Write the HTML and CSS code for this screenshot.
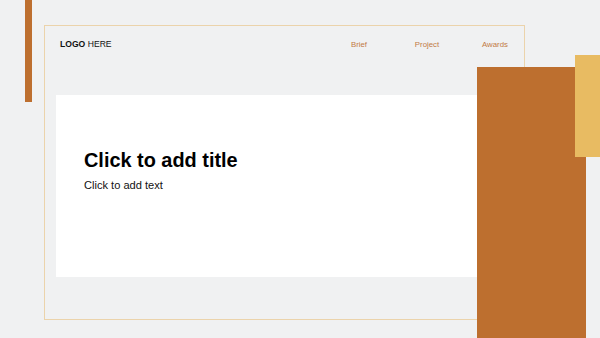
FILE: index.html
```html
<!DOCTYPE html>
<html lang="en">
<head>
  <meta charset="UTF-8" />
  <title>Slide</title>
  <link rel="stylesheet" href="styles.css">
</head>
<body>
  <div class="slide">
    <div class="bar-left"></div>
    <div class="frame">
      <div class="header">
        <div class="logo"><b>LOGO</b> HERE</div>
        <nav class="nav">
          <span>Brief</span>
          <span>Project</span>
          <span>Awards</span>
        </nav>
      </div>
      <div class="panel">
        <h1>Click to add title</h1>
        <p>Click to add text</p>
      </div>
    </div>
    <div class="block-orange"></div>
    <div class="block-yellow"></div>
  </div>
</body>
</html>
```

FILE: styles.css
```css
body {
  margin: 0;
  font-family: "Liberation Sans", Arial, sans-serif;
}

.slide {
  position: relative;
  width: 600px;
  height: 338px;
  overflow: hidden;
  background: #f0f1f2;
  padding: 25px 0 0 44px;
  box-sizing: border-box;
}

.bar-left {
  position: absolute;
  left: 25px;
  top: 0;
  width: 7px;
  height: 102px;
  background: #bd6f2f;
}

.frame {
  width: 481px;
  height: 295px;
  border: 1px solid #ebd3ab;
  box-sizing: border-box;
}

.header {
  display: flex;
  align-items: center;
  justify-content: space-between;
  height: 35px;
  padding: 0 9px 0 15px;
}

.logo {
  font-size: 8.6px;
  color: #111;
}

.nav {
  display: flex;
  gap: 28px;
  padding-top: 1px;
}

.nav span {
  width: 40px;
  text-align: center;
  font-size: 7.8px;
  color: #c27a45;
}

.panel {
  margin: 34px 11px 0 11px;
  height: 182px;
  background: #fff;
  padding: 52px 0 0 28px;
  box-sizing: border-box;
}

.panel h1 {
  margin: 0;
  font-size: 19.9px;
  font-weight: bold;
  color: #000;
  line-height: 26px;
}

.panel p {
  margin: 6px 0 0;
  font-size: 11.1px;
  color: #111;
}

.block-orange {
  position: absolute;
  left: 477px;
  top: 67px;
  width: 109px;
  height: 271px;
  background: #bd6f2f;
}

.block-yellow {
  position: absolute;
  left: 575px;
  top: 55px;
  width: 25px;
  height: 102px;
  background: #e8bb62;
}
```
